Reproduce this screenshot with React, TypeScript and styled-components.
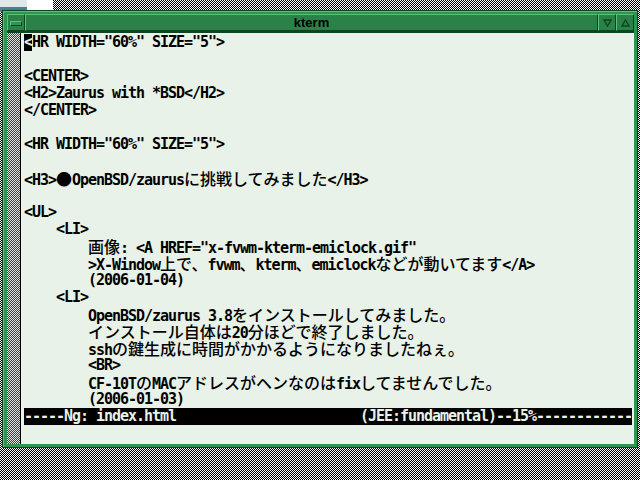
import styled, { createGlobalStyle } from 'styled-components'

const Colors = {
  screen: '#e8f2e8',
  frame: '#2f9650',
  title: '#2a8249',
  light: '#5cc07a',
  dark: '#0e4520',
}

const GlobalStyle = createGlobalStyle`
  html, body {
    margin: 0;
    padding: 0;
  }
  body {
    width: 640px;
    height: 480px;
    overflow: hidden;
  }
`

const dither = (a: string, b: string) => `
  background-color: ${b};
  background-image: conic-gradient(${a} 25%, ${b} 0 50%, ${a} 0 75%, ${b} 0);
  background-size: 2px 2px;
`

const Desktop = styled.div`
  position: relative;
  width: 640px;
  height: 480px;
  ${dither('#000', '#fff')}
`

// bits of other windows peeking out behind kterm
const BackWindow = styled.div`
  position: absolute;
  left: 0;
  top: 0;
  width: 27px;
  height: 12px;
  background: #dfe9e6;
  border-bottom: 5px solid #4f7e8b;
  box-sizing: border-box;
`

const BackPaper = styled.div`
  position: absolute;
  left: 27px;
  top: 0;
  width: 26px;
  height: 10px;
  background: #fff;
`

const Window = styled.div`
  position: absolute;
  left: 2px;
  top: 10px;
  width: 636px;
  height: 438px;
  box-sizing: border-box;
  display: flex;
  flex-direction: column;
  padding: 3px 3px 3px 4px;
  background: ${Colors.frame};
  border: 1px solid ${Colors.dark};
  box-shadow: inset 1px 1px 0 ${Colors.light};
`

const TitleBar = styled.div`
  display: flex;
  height: 19px;
  box-sizing: border-box;
  border-bottom: 2px solid ${Colors.dark};
`

const Bevel = styled.div`
  box-sizing: border-box;
  background: ${Colors.title};
  border-top: 1px solid ${Colors.light};
  border-left: 1px solid ${Colors.light};
  border-right: 1px solid ${Colors.dark};
  border-bottom: 1px solid ${Colors.dark};
  display: flex;
  align-items: center;
  justify-content: center;
`

const Button = styled(Bevel)`
  width: 18px;
  flex: none;
`

const Title = styled(Bevel)`
  flex: 1;
  font-family: "Liberation Sans", Arial, sans-serif;
  font-weight: bold;
  font-size: 13px;
  color: #000;
`

const MinimizeMark = styled.div`
  width: 10px;
  height: 3px;
  background: ${Colors.frame};
  border: 1px solid ${Colors.dark};
  border-top-color: ${Colors.light};
  border-left-color: ${Colors.light};
  margin-top: 2px;
`

const Screen = styled.div`
  flex: 1;
  display: flex;
  overflow: hidden;
  background: ${Colors.screen};
`

const ScrollBar = styled.div`
  width: 13px;
  flex: none;
  border-right: 1px solid #000;
  ${dither('#3c3c3c', '#e4e8e4')}
`

const Text = styled.div`
  padding: 1px 0 0 3px;
  font-family: "DejaVu Sans Mono", monospace;
  font-weight: bold;
  font-size: 15px;
  letter-spacing: -1.03px;
  color: #000;
`

const Line = styled.div<{ $inverse?: boolean }>`
  width: 608px;
  height: 17px;
  line-height: 17px;
  white-space: pre;
  background: ${props => props.$inverse ? '#000' : 'transparent'};
  color: ${props => props.$inverse ? Colors.screen : '#000'};
`

const Wide = styled.span`
  font-family: "Noto Sans CJK JP", sans-serif;
  font-weight: 500;
  font-size: 16px;
  letter-spacing: 0;
`

const Cursor = styled.span`
  display: inline-block;
  width: 8px;
  height: 17px;
  vertical-align: top;
  background: #000;
  color: ${Colors.screen};
`

const lines = [
  '<HR WIDTH="60%" SIZE="5">',
  '',
  '<CENTER>',
  '<H2>Zaurus with *BSD</H2>',
  '</CENTER>',
  '',
  '<HR WIDTH="60%" SIZE="5">',
  '',
  '<H3>●OpenBSD/zaurusに挑戦してみました</H3>',
  '',
  '<UL>',
  '    <LI>',
  '        画像: <A HREF="x-fvwm-kterm-emiclock.gif"',
  '        >X-Window上で、fvwm、kterm、emiclockなどが動いてます</A>',
  '        (2006-01-04)',
  '    <LI>',
  '        OpenBSD/zaurus 3.8をインストールしてみました。',
  '        インストール自体は20分ほどで終了しました。',
  '        sshの鍵生成に時間がかかるようになりましたねぇ。',
  '        <BR>',
  '        CF-10TのMACアドレスがヘンなのはfixしてませんでした。',
  '        (2006-01-03)',
]

const modeLine =
  '-----Ng: index.html' + ' '.repeat(23) + '(JEE:fundamental)--15%' + '-'.repeat(12)

// kanji/kana take two columns, so give them their own font and size
const renderRuns = (text: string) =>
  text.split(/([^\x00-\x7f]+)/).map((run, i) =>
    i % 2 === 1 ? <Wide key={i}>{run}</Wide> : run
  )

const DownArrow = () => (
  <svg width="9" height="8" viewBox="0 0 9 8">
    <polygon points="1,1 8,1 4.5,7" fill={Colors.title} stroke={Colors.dark} strokeWidth="1.4" />
  </svg>
)

const UpArrow = () => (
  <svg width="9" height="8" viewBox="0 0 9 8">
    <polygon points="4.5,1 8,7 1,7" fill={Colors.title} stroke={Colors.dark} strokeWidth="1.4" />
  </svg>
)

const App = () => {
  return <>
    <GlobalStyle />
    <Desktop>
      <BackWindow />
      <BackPaper />
      <Window>
        <TitleBar>
          <Button><MinimizeMark /></Button>
          <Title>kterm</Title>
          <Button><DownArrow /></Button>
          <Button><UpArrow /></Button>
        </TitleBar>
        <Screen>
          <ScrollBar />
          <Text>
            {lines.map((line, i) =>
              <Line key={i}>
                {i === 0
                  ? <><Cursor>{line[0]}</Cursor>{renderRuns(line.slice(1))}</>
                  : renderRuns(line)}
              </Line>
            )}
            <Line $inverse>{modeLine}</Line>
          </Text>
        </Screen>
      </Window>
    </Desktop>
  </>
}

export default App
